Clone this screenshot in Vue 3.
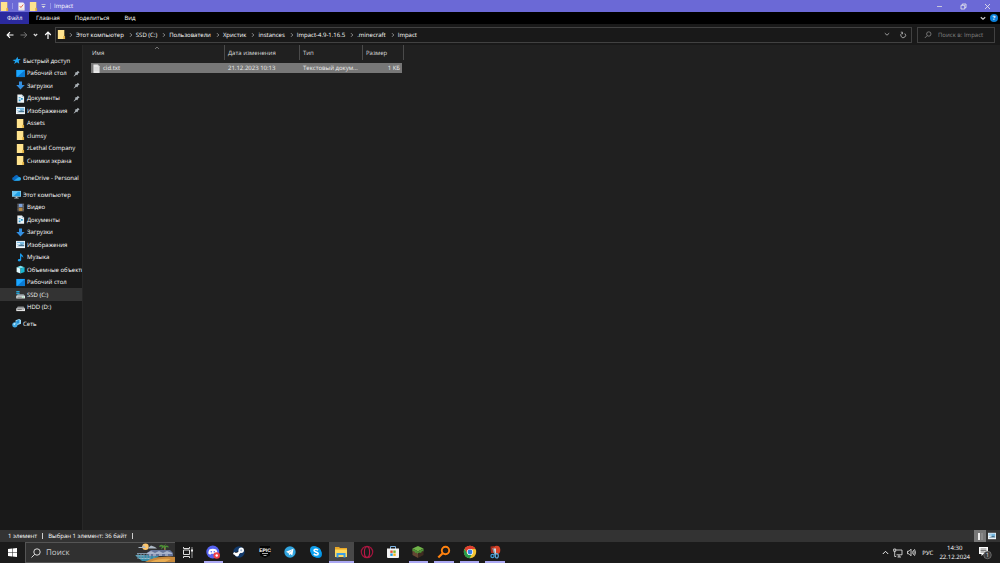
<script setup>
const crumbs = ['Этот компьютер', 'SSD (C:)', 'Пользователи', 'Христик', 'instances', 'Impact-4.9-1.16.5', '.minecraft', 'Impact']

const groups = [
  [
    { icon: 'star', text: 'Быстрый доступ', root: true },
    { icon: 'desktop', text: 'Рабочий стол', pin: true },
    { icon: 'download', text: 'Загрузки', pin: true },
    { icon: 'document', text: 'Документы', pin: true },
    { icon: 'picture', text: 'Изображения', pin: true },
    { icon: 'folder', text: 'Assets' },
    { icon: 'folder', text: 'clumsy' },
    { icon: 'folder', text: 'zLethal Company' },
    { icon: 'folder', text: 'Снимки экрана' }
  ],
  [{ icon: 'cloud', text: 'OneDrive - Personal', root: true }],
  [
    { icon: 'computer', text: 'Этот компьютер', root: true },
    { icon: 'video', text: 'Видео' },
    { icon: 'document', text: 'Документы' },
    { icon: 'download', text: 'Загрузки' },
    { icon: 'picture', text: 'Изображения' },
    { icon: 'music', text: 'Музыка' },
    { icon: 'cube', text: 'Объемные объекты' },
    { icon: 'desktop', text: 'Рабочий стол' },
    { icon: 'ssd', text: 'SSD (C:)', active: true },
    { icon: 'hdd', text: 'HDD (D:)' }
  ],
  [{ icon: 'network', text: 'Сеть', root: true }]
]

const apps = [
  { icon: 'taskview', name: 'Представление задач' },
  { icon: 'discord', name: 'Discord', open: true },
  { icon: 'steam', name: 'Steam' },
  { icon: 'epic', name: 'Epic Games' },
  { icon: 'telegram', name: 'Telegram' },
  { icon: 'skype', name: 'Skype' },
  { icon: 'explorer', name: 'Проводник', current: true },
  { icon: 'opera', name: 'Opera GX' },
  { icon: 'store', name: 'Microsoft Store' },
  { icon: 'block', name: 'Minecraft', open: true },
  { icon: 'everything', name: 'Everything', open: true },
  { icon: 'chrome', name: 'Chrome', open: true },
  { icon: 'snip', name: 'Ножницы', open: true }
]
</script>

<template>
  <svg class="defs" aria-hidden="true">
    <symbol id="folder" viewBox="0 0 10 10"><path fill="#e0ae3f" d="M1 0h7v6l1 1v3H1z" /><path fill="#ffe38e" d="M1 0h7v6l-1 1v3H1z" /></symbol>
    <symbol id="star" viewBox="0 0 10 10"><path fill="#1fa2ee" d="M6 .8 6.800 3.200 9.800 3.500 7.500 5.300 8 8.500 5.500 7 2.200 9 3.500 6 .5 4.500 4.200 3.800z" /></symbol>
    <symbol id="desktop" viewBox="0 0 10 10"><path fill="#0b7bd4" d="M.5 1h9.500v8H.5z" /><path fill="#1ba6ff" d="M.5 1H10L1.500 8.500h-1z" /></symbol>
    <symbol id="download" viewBox="0 0 10 10"><path fill="#348fe0" d="M3.300.5h3.400v4h3L5 9.500.3 4.500h3z" /></symbol>
    <symbol id="document" viewBox="0 0 10 10"><path fill="#eef3f6" d="M1.500.5H6.500L9 3v6.800H1.500z" /><path fill="#9bb2c0" d="M6.500.5V3H9z" /><path fill="#2c9bd1" d="M3 3.500h2v1.200H3zM5.500 4.500h2v2h-2zM3 6h2v2H3z" /></symbol>
    <symbol id="picture" viewBox="0 0 10 10"><path fill="#eef4f8" d="M0 1h10v8H0z" /><path fill="#77b9e2" d="M.9 2h8.200v3H.9z" /><path fill="#44728f" d="m4 5.500 2-.8 3.100.8v1.500H.9z" /><path fill="#fff" d="M1 3.300h3.500v1H1z" /></symbol>
    <symbol id="cloud" viewBox="0 0 10 10"><path fill="#0b66bd" d="M.2 6.500a2 2 0 0 1 1.800-2A2.800 2.800 0 0 1 7 3.500L9.500 6 7 8.500H2.200a2 2 0 0 1-2-2z" /><path fill="#28a8ea" d="M2 8.500 7 4.800a2 2 0 0 1 3 1.900 1.800 1.800 0 0 1-1.800 1.800z" /></symbol>
    <symbol id="computer" viewBox="0 0 10 10"><path fill="#8ed0ef" d="M0 1h10v6.500H0z" /><path fill="#1e9fe6" d="M.8 1.700h8.400v5H.8z" /><path fill="#66c6f5" d="M.8 1.700H7l-5 5H.8z" /><path fill="#b8c3ca" d="M4 7.500h2v1h1.500v1h-5v-1H4z" /></symbol>
    <symbol id="video" viewBox="0 0 10 10"><path fill="#4b4b50" d="M1.500.5h7.500v9H1.500z" /><path fill="#7aa1dc" d="M3.200 1h4v3.500h-4z" /><path fill="#b58a45" d="M3.200 5.300h4v3.500h-4z" /><path stroke="#999" stroke-width=".7" stroke-dasharray="1 1" d="M2.300 1v8M8.200 1v8" /></symbol>
    <symbol id="music" viewBox="0 0 10 10"><path fill="#18a0f5" d="M4.500.5h1.200c.3 1.700 2.800 2 2.300 5-.4-1.500-1.200-1.800-2.200-2V7.500c0 2-3.800 2.700-3.800.6 0-1.300 1.500-1.700 2.500-1.400z" /></symbol>
    <symbol id="cube" viewBox="0 0 10 10"><path fill="#7be4f3" d="M.7 2.500 5 .7l4.500 1.800L5 4z" /><path fill="#e2fbff" d="M.7 2.500 5 4v5.500L.7 7.700z" /><path fill="#19b5cf" d="M9.500 2.500 5 4v5.500l4.500-1.800z" /></symbol>
    <symbol id="ssd" viewBox="0 0 10 10"><path fill="#28a5d8" d="M.3 1h3.700v1.600H.3zM.3 3h3.700v1.600H.3z" /><path fill="#9ca4a8" d="M2 4.600h6.500L10 6.800H.3z" /><path fill="#e3e6e7" d="M.3 6.500H10v2.900H.3z" /><path fill="#444" d="M1.500 7.500h5v.8h-5z" /><path fill="#26c95b" d="M7.300 7.500h1.200v.8H7.300z" /></symbol>
    <symbol id="hdd" viewBox="0 0 10 10"><path fill="#8b8e90" d="M2 4h6.500L10 6.500H.3z" /><path fill="#e3e3e3" d="M.3 6H10v3H.3z" /><path fill="#444" d="M1.500 7h5v.8h-5z" /><path fill="#777" d="M7.300 7h1.200v.8H7.300z" /></symbol>
    <symbol id="network" viewBox="0 0 10 10"><path fill="#9bdaf7" d="m4 1.500 4-1.500L10 1.200v4L5.500 7 4 5.500z" /><path fill="#278fd2" d="m4.700 2.100 3.500-1.200v3.800L4.700 5.500z" /><circle cx="3.200" cy="6.500" r="2.900" fill="#3fa9e5" /><path fill="#bde8fa" d="m1.200 5.500 2-1.300.8 1L2.700 7z" /></symbol>
    <symbol id="pin" viewBox="0 0 8 8"><path fill="#a9b0b5" d="m5.500.8 2 2-1.500 1L5 6 3.800 5.300 1 7.500.7 7.100 2.700 4.300 2 3l2.500-.8z" /></symbol>
    <symbol id="page" viewBox="0 0 8 10"><path fill="#e6e6e6" d="M.5.500h5L7.500 2.500v7.500h-7z" /><path fill="#b6b6b6" d="M5.500.500v2h2z" /><path stroke="#c8c8c8" stroke-width=".5" d="M1.500 4h5M1.500 5.500h5M1.500 7h5" /></symbol>
    <symbol id="props" viewBox="0 0 8 10"><path fill="#f6f2f0" d="M.5.500h5.500l1.500 1.500v7.500h-7z" /><path fill="none" stroke="#dd5a3c" stroke-width="1" d="m2 4.500 1.300 1.700L6 2.800" /><path stroke="#bbb" stroke-width=".5" d="M1.500 8h5" /></symbol>

    <symbol id="taskview" viewBox="0 0 14 14"><path fill="none" stroke="#ddd" d="M2.500 5v4.500h6V5zM2.500 2v1.500h6V2M2.500 13v-1.500h6V13" /><path stroke="#aaa" stroke-width=".9" d="M11 2v11" /><path stroke="#fff" stroke-width="1.800" d="M11 4.500v2" /></symbol>
    <symbol id="discord" viewBox="0 0 14 14"><circle cx="6.800" cy="7" r="6.500" fill="#5663f0" /><path fill="#fff" d="M3.300 4.500q3.500-1.300 7 0 1.300 2 1 4.200l-2 1-.6-.9H5l-.6.9-2-1q-.2-2 .9-4.200z" /><circle cx="5.300" cy="6.800" r=".8" fill="#5663f0" /><circle cx="8.300" cy="6.800" r=".8" fill="#5663f0" /><circle cx="10.700" cy="10.500" r="3.300" fill="#ef4048" /><circle cx="10.700" cy="10.500" r="1.200" fill="#fff" /></symbol>
    <symbol id="steam" viewBox="0 0 14 14"><circle cx="7" cy="7" r="5.700" fill="#123a6c" /><path stroke="#fff" stroke-width="2.400" d="m1.500 8 3.500 1.800L9 5.500" /><circle cx="9.200" cy="5.300" r="2.700" fill="#fff" /><circle cx="9.200" cy="5.300" r="1.100" fill="#9bb4d0" /><circle cx="5" cy="9.500" r="2" fill="#fff" /></symbol>
    <symbol id="epic" viewBox="0 0 14 14"><path fill="#050505" d="M2 1h10v9.500L7 13l-5-2.500z" /><text x="7" y="7" text-anchor="middle" font-size="5" font-weight="700" font-family="Liberation Sans, sans-serif" fill="#fff">EPIC</text><path stroke="#aaa" stroke-width="1" d="M4 8.500h6M5.500 10.500h3" /></symbol>
    <symbol id="telegram" viewBox="0 0 14 14"><circle cx="7" cy="7" r="5.700" fill="#31a5df" /><path fill="#fff" d="m3 6.800 7.500-3-1.200 6.700-2-1.500-1.200 1.200-.4-2z" /><path stroke="#8dc4e5" stroke-width=".6" d="M5.700 8.100 9 5.300" /></symbol>
    <symbol id="skype" viewBox="0 0 14 14"><circle cx="5" cy="5" r="4" fill="#159ce8" /><circle cx="9" cy="9" r="4" fill="#0590df" /><circle cx="7" cy="7" r="5.200" fill="#0a9fee" /><path fill="none" stroke="#fff" stroke-width="1.500" d="M9 5.200C8 4 5 4 5 5.500S9.200 7 9.200 8.700 6 10.500 4.800 8.800" /></symbol>
    <symbol id="explorer" viewBox="0 0 14 14"><path fill="#e9a727" d="M1 2h4l1 1h7v3H1z" /><path fill="#ffd95d" d="M1 4.500h12v7.500H1z" /><path fill="#3c9fe5" d="M2.500 8h9v4.500h-2V10h-5v2.500h-2z" /></symbol>
    <symbol id="opera" viewBox="0 0 14 14"><circle cx="7" cy="7" r="5.700" fill="none" stroke="#a3143d" stroke-width="1.200" /><ellipse cx="7" cy="7" rx="2.600" ry="5.300" fill="none" stroke="#b91c48" stroke-width="1.100" /></symbol>
    <symbol id="store" viewBox="0 0 14 14"><path fill="none" stroke="#7fb5e4" d="M4.500 4V1.500h5V4" /><path fill="#f3f3f3" d="M1 3.500h12V12q0 1-1 1H2q-1 0-1-1z" /><path fill="#e9522f" d="M4.300 5.500h2.400v2.400H4.300z" /><path fill="#7bb72b" d="M7.300 5.500h2.400v2.400H7.300z" /><path fill="#209cdd" d="M4.300 8.500h2.400v2.400H4.300z" /><path fill="#f8b51c" d="M7.300 8.500h2.400v2.400H7.300z" /></symbol>
    <symbol id="block" viewBox="0 0 14 14"><path fill="#70b449" d="m1.500 3.500 5.500-2.500 5.500 2.500L7 6.500z" /><path fill="#644632" d="m1.500 3.500 5.500 3V13l-5.500-3z" /><path fill="#3e2b20" d="m12.500 3.500-5.500 3V13l5.500-3z" /><path fill="#4f9337" d="m1.500 3.500 5.500 3V9l-1.500-1.500-1 .5L3 6l-1.500.5zM12.500 3.500 7 6.500V8l2-.5 1 .5 1-2 1.500.5z" /></symbol>
    <symbol id="everything" viewBox="0 0 14 14"><circle cx="8.500" cy="5.500" r="3.700" fill="none" stroke="#ff820f" stroke-width="1.900" /><path stroke="#ff820f" stroke-width="2.200" d="M5.700 8.200 1.300 12.500" /></symbol>
    <symbol id="chrome" viewBox="0 0 14 14"><circle cx="7" cy="7" r="6.200" fill="#f1c232" /><path fill="#df3e30" d="M1.600 4A6.200 6.200 0 0 1 12.400 4H7L4.300 8.500z" /><path fill="#279b4b" d="M1.600 4A6.200 6.200 0 0 0 6.500 13.200L9.500 8.500H4.300z" /><circle cx="7" cy="7" r="3.100" fill="#fff" /><circle cx="7" cy="7" r="2.400" fill="#347ce5" /></symbol>
    <symbol id="snip" viewBox="0 0 14 14"><path fill="#a62a1c" d="M2.500 1.500 6 1v7H3z" /><ellipse cx="8.700" cy="5" rx="3.600" ry="4.300" fill="#d84428" /><path stroke="#cfdce5" stroke-width="2" d="M7 3.500v6" /><path stroke="#8c9aa5" stroke-width="1.300" d="M4.800 3 6.800 9" /><circle cx="4.500" cy="11" r="1.600" fill="none" stroke="#3d9ad7" stroke-width="1.200" /><ellipse cx="8.800" cy="10.800" rx="1.500" ry="2.200" fill="none" stroke="#5fa9dc" stroke-width="1.200" /></symbol>
  </svg>

  <div class="screen">
    <header class="titlebar">
      <svg class="i9"><use href="#folder" /></svg>
      <span class="tick"></span>
      <button class="plain props" aria-label="Свойства"><svg class="page"><use href="#props" /></svg></button>
      <button class="plain" aria-label="Новая папка"><svg class="i9"><use href="#folder" /></svg></button>
      <button class="plain more" aria-label="Настройка панели"><svg width="5" height="5" viewBox="0 0 5 5"><path fill="#ddd" d="M.5 0h4v.8h-4zM.5 2h4L2.500 4z" /></svg></button>
      <span class="tick"></span>
      <h1>Impact</h1>
      <div class="window-buttons">
        <button class="plain" aria-label="Свернуть"><svg width="7" height="7" viewBox="0 0 7 7"><path stroke="#ddd" stroke-width=".8" d="M1 3.500h5" /></svg></button>
        <button class="plain" aria-label="Восстановить"><svg width="7" height="7" viewBox="0 0 7 7"><path fill="none" stroke="#eee" stroke-width=".8" d="M1 2.300h3.700V6H1zM2.300 2V1H6v3.700H5" /></svg></button>
        <button class="plain" aria-label="Закрыть"><svg width="7" height="7" viewBox="0 0 7 7"><path stroke="#eee" stroke-width=".8" d="m1 1 5 5M6 1 1 6" /></svg></button>
      </div>
    </header>

    <nav class="menu">
      <button class="file">Файл</button>
      <button>Главная</button>
      <button>Поделиться</button>
      <button>Вид</button>
      <div class="menu-end">
        <button class="plain" aria-label="Развернуть ленту"><svg width="6" height="5" viewBox="0 0 6 5"><path fill="none" stroke="#ccc" stroke-width="1.200" d="m.8 1.200 2.200 2 2.200-2" /></svg></button>
        <button class="help" aria-label="Справка">?</button>
      </div>
    </nav>

    <div class="address-row">
      <div class="arrows">
        <button class="plain" aria-label="Назад"><svg width="8" height="8" viewBox="0 0 8 8"><path fill="none" stroke="#fff" stroke-width="1.200" d="M7.500 4H1.500M4 1.200 1.200 4 4 6.800" /></svg></button>
        <button class="plain" aria-label="Вперед"><svg width="8" height="8" viewBox="0 0 8 8"><path fill="none" stroke="#777" d="M.5 4h6M4 1.200 6.800 4 4 6.800" /></svg></button>
        <button class="plain" aria-label="Последние"><svg width="5" height="8" viewBox="0 0 5 8"><path fill="none" stroke="#ddd" stroke-width="1.200" d="m.8 3 1.700 1.700L4.200 3" /></svg></button>
        <button class="plain" aria-label="Вверх"><svg width="8" height="8" viewBox="0 0 8 8"><path fill="none" stroke="#fff" stroke-width="1.200" d="M4 8V1.500M1.200 4 4 1.200 6.800 4" /></svg></button>
      </div>
      <div class="address">
        <svg class="i9"><use href="#folder" /></svg>
        <ol>
          <li v-for="c in crumbs" :key="c">
            <svg width="4" height="6" viewBox="0 0 4 6"><path fill="none" stroke="#aaa" stroke-width=".8" d="M1 1.200 2.800 3 1 4.800" /></svg>
            <a href="#">{{ c }}</a>
          </li>
        </ol>
        <button class="plain" aria-label="Предыдущие расположения"><svg width="6" height="5" viewBox="0 0 6 5"><path fill="none" stroke="#999" d="m.8 1.200 2.200 2 2.200-2" /></svg></button>
        <button class="plain" aria-label="Обновить"><svg width="8" height="8" viewBox="0 0 8 8"><path fill="none" stroke="#aaa" stroke-width=".9" d="M5.800 2.500A2.400 2.400 0 1 1 3 2.200M1.800 1.200h1.700v2" /></svg></button>
      </div>
      <label class="find">
        <svg width="8" height="8" viewBox="0 0 8 8"><circle cx="4.800" cy="3" r="2.200" fill="none" stroke="#888" stroke-width=".8" /><path stroke="#888" stroke-width=".8" d="M3.200 4.600.8 7" /></svg>
        <input type="text" placeholder="Поиск в: Impact" aria-label="Поиск в: Impact" />
      </label>
    </div>

    <main class="body">
      <aside class="sidebar">
        <ul v-for="(g, i) in groups" :key="i">
          <li v-for="n in g" :key="n.text" :class="{ root: n.root, active: n.active }">
            <svg class="i9"><use :href="'#' + n.icon" /></svg>
            <a href="#">{{ n.text }}</a>
            <svg v-if="n.pin" class="pin"><use href="#pin" /></svg>
          </li>
        </ul>
      </aside>
      <section class="files">
        <table>
          <colgroup><col class="c-name" /><col class="c-date" /><col class="c-type" /><col class="c-size" /></colgroup>
          <thead>
            <tr>
              <th><div>Имя<svg class="sort" width="6" height="4" viewBox="0 0 6 4"><path fill="none" stroke="#888" stroke-width=".8" d="m1 3 2-2 2 2" /></svg></div></th>
              <th><div>Дата изменения</div></th>
              <th><div>Тип</div></th>
              <th><div>Размер</div></th>
            </tr>
          </thead>
          <tbody>
            <tr>
              <td><span class="name"><svg class="page"><use href="#page" /></svg>cid.txt</span></td>
              <td>21.12.2023 10:13</td>
              <td>Текстовый докум...</td>
              <td class="num">1 КБ</td>
            </tr>
          </tbody>
        </table>
      </section>
    </main>

    <footer class="status">
      <span>1 элемент</span>
      <span>Выбран 1 элемент: 36 байт</span>
      <div class="views">
        <button class="on" aria-label="Таблица"><svg width="9" height="9" viewBox="0 0 9 9"><path fill="#eee" d="M2 1h2v7H2z" /><path fill="#8b8b8b" d="M5 1h2v7H5z" /></svg></button>
        <button aria-label="Крупные значки"><svg width="8" height="8"><use href="#picture" /></svg></button>
      </div>
    </footer>

    <div class="taskbar">
      <button class="start" aria-label="Пуск"><svg width="9" height="9" viewBox="0 0 9 9"><path fill="#fff" d="m0 1 4-.5v3.700H0zM4.500.4 9 0v4.200H4.500zM0 4.800h4v3.700L0 8zM4.500 4.800H9V9l-4.500-.4z" /></svg></button>
      <label class="search">
        <svg width="10" height="10" viewBox="0 0 10 10"><circle cx="6" cy="4" r="3.200" fill="none" stroke="#eee" stroke-width=".9" /><path stroke="#eee" stroke-width=".9" d="M3.700 6.300.5 9.500" /></svg>
        <input type="text" placeholder="Поиск" aria-label="Поиск" />
        <svg class="beach" width="40" height="19" viewBox="0 0 40 19">
          <path fill="#348ca8" d="M0 12h14l10 1-4 3-6 2H7z" /><path fill="#85c4d2" d="M3 15h12v1H5zM1 12.500h8v.8H1z" />
          <circle cx="10.500" cy="3.800" r="3.200" fill="#ffc66b" /><path fill="#aeb9c5" d="M3 4h4l1-1.500h1L11 5H4zM13 5l3-2.500L20 4l2 1.500h-8z" />
          <path fill="#9d6b50" d="M28.500 2.500h1.300L31 9h-1.500z" /><path fill="#4b8f35" d="M29 3q-4-3-5 1l3-.5-1 3 3-2.500 2 3v-3l3 .5q-1-3-4-1.500L31 .3z" />
          <path fill="#64749a" d="m12 10 4-3h8l11 0 3 3v3H14z" /><path fill="#a9b5cc" d="m12 10 4-2 4 2 4-2 4 2 4-2 5 2v1H12z" /><path fill="#c7d0df" d="M14 11.500h2v1h-2zM18 11.500h3v1h-3zM24 11.500h3v1h-3zM30 11.500h3v1h-3z" /><path stroke="#7f93a5" d="M2 10.500h10M3 11v5M6 11v5M9 11v5M12 11v5M15 13v4M19 13v3" />
          <path fill="#c98a3c" d="M10 19q9-5 17-5 6-1 13 0v5z" /><path fill="#e9ad52" d="M15 19q9-4 21-3l-6 3z" />
        </svg>
      </label>
      <div class="apps">
        <button v-for="a in apps" :key="a.name" :class="{ open: a.open, current: a.current }" :aria-label="a.name"><svg class="i14"><use :href="'#' + a.icon" /></svg></button>
      </div>
      <div class="tray">
        <button class="plain" aria-label="Скрытые значки"><svg width="7" height="5" viewBox="0 0 7 5"><path fill="none" stroke="#eee" d="m.8 4 2.700-2.700L6.200 4" /></svg></button>
        <button class="plain" aria-label="Сеть"><svg width="10" height="10" viewBox="0 0 10 10"><path fill="none" stroke="#eee" stroke-width=".8" d="M3 2h6v4.800H3.500M6 7v2M4.500 9h3.500M.7 1h2v2.300h-2zM1.700 3.300V8.500h1.500" /></svg></button>
        <button class="plain" aria-label="Громкость"><svg width="9" height="9" viewBox="0 0 9 9"><path fill="none" stroke="#eee" stroke-width=".8" d="M.5 3.200H2L4 1.200v6.600L2 5.800H.5zM5.300 3.300q.8 1.200 0 2.400M6.400 2.200q1.600 2.300 0 4.600M7.500 1.200q2 3.300 0 6.600" /></svg></button>
        <span class="lang">РУС</span>
        <time datetime="2024-12-22T14:30"><span>14:30</span><span>22.12.2024</span></time>
        <button class="plain note" aria-label="Уведомления"><svg width="14" height="15" viewBox="0 0 14 15"><path fill="#fff" d="M1 2h9v7H5.500L3.500 11V9H1z" /><path stroke="#444" stroke-width=".7" d="M2.500 4h6M2.500 5.500h6M2.500 7h4" /><circle cx="9.500" cy="10" r="3.800" fill="#3b3b3b" stroke="#888" stroke-width=".6" /><text x="9.500" y="12.300" font-size="6" text-anchor="middle" fill="#ddd">1</text></svg></button>
      </div>
    </div>
  </div>
</template>

<style>
body { background: #202020; }
</style>

<style scoped>
.screen { display: flex; flex-direction: column; height: 100vh; font: 6px/8px "Open Sans", "Noto Sans", sans-serif; text-rendering: geometricPrecision; color: #fff; background: #202020; overflow: hidden; }
svg { display: block; flex: none; }
.defs { display: none; }
button { font: inherit; color: inherit; border: 0; padding: 0; background: none; }
a { color: inherit; text-decoration: none; }
ul, ol { list-style: none; margin: 0; padding: 0; }
input { font: inherit; color: inherit; background: none; border: 0; padding: 0; outline: 0; min-width: 0; text-rendering: inherit; }
button { text-rendering: inherit; }
.plain { display: flex; align-items: center; justify-content: center; }
.i9 { width: 9px; height: 9px; }
.i14 { width: 14px; height: 14px; }
.page { width: 7px; height: 9px; }

.titlebar { display: flex; align-items: center; height: 12px; background: #6b69d6; flex: none; }
.titlebar h1 { font: inherit; margin: 0 0 0 3px; }
.tick { width: 1px; height: 6px; background: #9391e6; margin-left: 3px; }
.props { margin: 0 4px 0 5px; }
.more { margin: 0 1px 0 3px; }
.window-buttons { display: flex; margin-left: auto; padding-right: 1px; }
.window-buttons button { width: 24px; height: 12px; }

.menu { display: flex; height: 12px; background: #000; flex: none; }
.menu button { padding: 0 7px; }
.menu > button { margin-right: 1px; }
.menu > .file { width: 29px; margin: 0; background: #2b2a9e; }
.menu-end { display: flex; align-items: center; margin-left: auto; gap: 4px; padding-right: 2px; }
.menu-end button { padding: 0; }
.menu .help { width: 8px; height: 8px; border-radius: 50%; background: #0d80d8; font-weight: 700; }

.address-row { display: flex; align-items: center; height: 21px; background: #191919; flex: none; padding-right: 5px; }
.arrows { display: flex; justify-content: space-between; width: 46px; padding-left: 6px; }
.address, .find { box-sizing: border-box; height: 16px; border: 1px solid #414141; display: flex; align-items: center; }
.address { flex: 1; margin-left: 3px; padding-left: 1px; }
.address ol { display: flex; flex: 1; margin-left: 2px; }
.address li { display: flex; align-items: center; gap: 3px; margin-left: 1px; margin-right: 4px; }
.address button { width: 16px; height: 14px; }
.find { width: 78px; margin-left: 5px; padding-left: 6px; gap: 6px; }
.find input { width: 60px; }
.find input::placeholder { color: #858585; opacity: 1; }

.body { flex: 1; display: flex; min-height: 0; }
.sidebar { width: 83px; background: #191919; padding-top: 9px; border-right: 1px solid #272727; box-sizing: border-box; overflow: hidden; display: flex; flex-direction: column; gap: 4px; flex: none; }
.sidebar li { display: flex; align-items: center; height: 13px; padding-left: 16px; gap: 2px; white-space: nowrap; }
.sidebar li:nth-child(even) { height: 12px; }
.sidebar li.root { padding-left: 12px; }
.sidebar li.active { background: #333; }
.pin { width: 7px; height: 7px; margin: 0 2px 0 auto; }

.files { flex: 1; padding-left: 8px; }
table { table-layout: fixed; width: 311px; border-collapse: collapse; }
.c-name { width: 134px; }
.c-date { width: 75px; }
.c-type { width: 63px; }
.c-size { width: 39px; }
th { font-weight: 400; text-align: left; padding: 0 0 3px; height: 15px; color: #dedede; }
th div { position: relative; height: 15px; line-height: 17px; padding-left: 3px; border-right: 1px solid #4a4a4a; }
th:first-child div { padding-left: 1px; }
th:last-child div { margin-right: -2px; }
.sort { position: absolute; left: 63px; top: 1px; }
tbody tr { background: #777; }
td { height: 10px; line-height: 10px; padding: 0 0 0 3px; white-space: nowrap; overflow: hidden; color: #eee; }
td:first-child { padding-left: 2px; }
td.num { text-align: right; padding-right: 2px; }
.name { display: flex; align-items: center; gap: 3px; }

.status { display: flex; align-items: center; height: 12px; background: #333; flex: none; padding-left: 8px; }
.status span { padding-right: 5px; border-right: 1px solid #ccc; margin-right: 5px; line-height: 6px; }
.views { display: flex; margin-left: auto; padding-right: 2px; }
.views button { width: 12px; height: 12px; display: flex; align-items: center; justify-content: center; }
.views .on { background: #777; }

.taskbar { display: flex; height: 21px; background: #1b1b1b; flex: none; }
.start { width: 25px; display: flex; align-items: center; justify-content: center; }
.search { box-sizing: border-box; width: 150px; background: #303030; border: 1px solid #555; border-right: 0; display: flex; align-items: center; padding-left: 5px; gap: 5px; font-size: 8px; }
.search input { flex: 1; line-height: 12px; }
.search input::placeholder { color: #ccc; opacity: 1; }
.apps { display: grid; grid-template-columns: repeat(13, minmax(0, 1fr)); width: 333px; }
.apps button { display: flex; justify-content: center; align-items: center; border-bottom: 2px solid transparent; padding-top: 1px; }
.apps .open { border-color: #aaa7f2; margin: 0 3px; }
.apps .current { border-color: #aaa7f2; background: #484848; }
.tray { display: flex; align-items: center; margin-left: auto; gap: 4px; }
.lang { margin: 0 2px; }
time { display: flex; flex-direction: column; align-items: center; line-height: 9px; }
.note { margin: 0 8px 0 4px; }
</style>
